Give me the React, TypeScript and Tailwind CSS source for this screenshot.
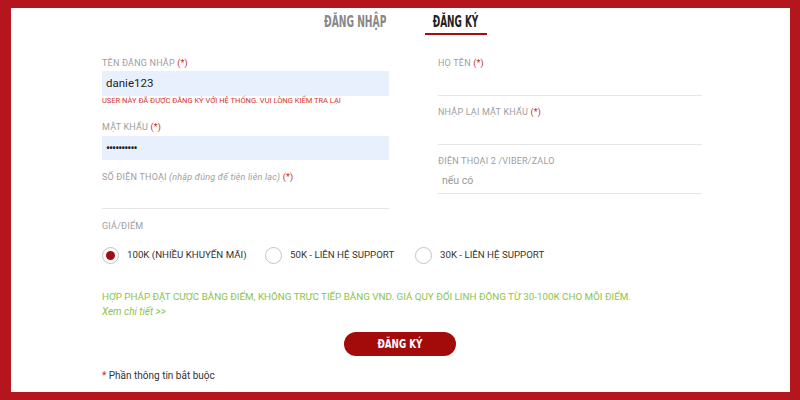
// Registration form (ĐĂNG KÝ tab) inside a red frame.
import { type FC } from 'react';

const condensed = { fontFamily: '"Liberation Sans Narrow", "DejaVu Sans Condensed", "Liberation Sans", sans-serif' };

const Req = () => <span className="text-[#c62828]">(*)</span>;

const Label: FC<{ children: React.ReactNode }> = ({ children }) => (
  <div className="h-[14px] text-[9px] leading-[14px] uppercase tracking-[0.2px] text-[#9e9e9e]">{children}</div>
);

const Radio: FC<{ checked?: boolean; label: string }> = ({ checked, label }) => (
  <label className="flex items-center gap-[8px]">
    <span className="flex h-[17px] w-[17px] items-center justify-center rounded-full border border-[#c4c4c4] bg-white">
      {checked && <span className="h-[9px] w-[9px] rounded-full bg-[#a40d0d]" />}
    </span>
    <span className="text-[9.7px] text-[#333]">{label}</span>
  </label>
);

export default function App() {
  return (
    <div className="h-[400px] w-[800px] bg-[#b5161d] pt-[8px] pl-[11px] pr-[10px] pb-[8px]" style={{ fontFamily: 'Roboto, "Liberation Sans", sans-serif' }}>
      <div className="h-full bg-white">
        {/* tabs */}
        <div className="flex items-start pl-[313px]" style={condensed}>
          <div className="w-[62px] pt-[5px] text-[15px] font-bold leading-[18px] text-[#888]">
            <span className="inline-block origin-left scale-x-[0.68] whitespace-nowrap">ĐĂNG NHẬP</span>
          </div>
          <div className="ml-[39px] flex w-[62px] flex-col items-center">
            <div className="pt-[5px] text-[15px] font-bold leading-[18px] text-[#222] scale-x-[0.66] whitespace-nowrap">ĐĂNG KÝ</div>
            <div className="mt-[2px] h-[2px] w-full bg-[#a40d0d]" />
          </div>
        </div>

        {/* fields */}
        <div className="mt-[21px] flex gap-[49px] pl-[91px]">
          <div className="w-[287px]">
            <Label>Tên đăng nhập <Req /></Label>
            <div className="mt-[1px] flex h-[25px] items-center bg-[#e8f0fe] px-[4px] text-[11.5px] text-[#222]">danie123</div>
            <div className="h-[10px] text-[7.5px] leading-[10px] text-[#d32f2f]">USER NÀY ĐÃ ĐƯỢC ĐĂNG KÝ VỚI HỆ THỐNG. VUI LÒNG KIỂM TRA LẠI</div>
            <div className="mt-[14px]"><Label>Mật khẩu <Req /></Label></div>
            <div className="mt-[2px] flex h-[24px] items-center bg-[#e8f0fe] px-[4px] text-[12px] leading-none tracking-[-1px] text-[#222]">••••••••••</div>
            <div className="mt-[10px]"><Label>Số điện thoại <span className="italic normal-case">(nhập đúng để tiện liên lạc)</span> <Req /></Label></div>
            <div className="h-[25px] border-b border-[#e6e6e6]" />
          </div>
          <div className="w-[264px]">
            <Label>Họ tên <Req /></Label>
            <div className="mt-[1px] h-[25px] border-b border-[#e6e6e6]" />
            <div className="mt-[9px]"><Label>Nhập lại mật khẩu <Req /></Label></div>
            <div className="mt-[1px] h-[25px] border-b border-[#e6e6e6]" />
            <div className="mt-[9px]"><Label>Điện thoại 2 /Viber/Zalo</Label></div>
            <div className="mt-[1px] flex h-[25px] items-center border-b border-[#e6e6e6] px-[4px] text-[10.5px] text-[#999]">nếu có</div>
          </div>
        </div>

        {/* price */}
        <div className="pl-[91px]">
          <div className="mt-[10px]"><Label>Giá/Điểm</Label></div>
          <div className="mt-[14px] flex items-center">
            <div className="w-[163px]"><Radio checked label="100K (NHIỀU KHUYẾN MÃI)" /></div>
            <div className="w-[150px]"><Radio label="50K - LIÊN HỆ SUPPORT" /></div>
            <Radio label="30K - LIÊN HỆ SUPPORT" />
          </div>
          <div className="mt-[25px] text-[9.8px] leading-[15px] uppercase text-[#8bc34a]">
            Hợp pháp đặt cược bằng điểm, không trực tiếp bằng VND. Giá quy đổi linh động từ 30-100K cho mỗi điểm.
          </div>
          <div className="text-[10px] leading-[15px] italic text-[#8bc34a]">Xem chi tiết &gt;&gt;</div>
        </div>

        <div className="mt-[13px] flex justify-center pr-[2px]">
          <button type="button" className="h-[24px] w-[112px] rounded-full bg-[#a30b0b] text-[13px] font-bold text-white" style={condensed}>
            <span className="inline-block scale-x-[0.75]">ĐĂNG KÝ</span>
          </button>
        </div>

        <div className="mt-[12px] pl-[91px] text-[10px] text-[#333]">
          <span className="text-[#c62828]">*</span> Phần thông tin bắt buộc
        </div>
      </div>
    </div>
  );
}
